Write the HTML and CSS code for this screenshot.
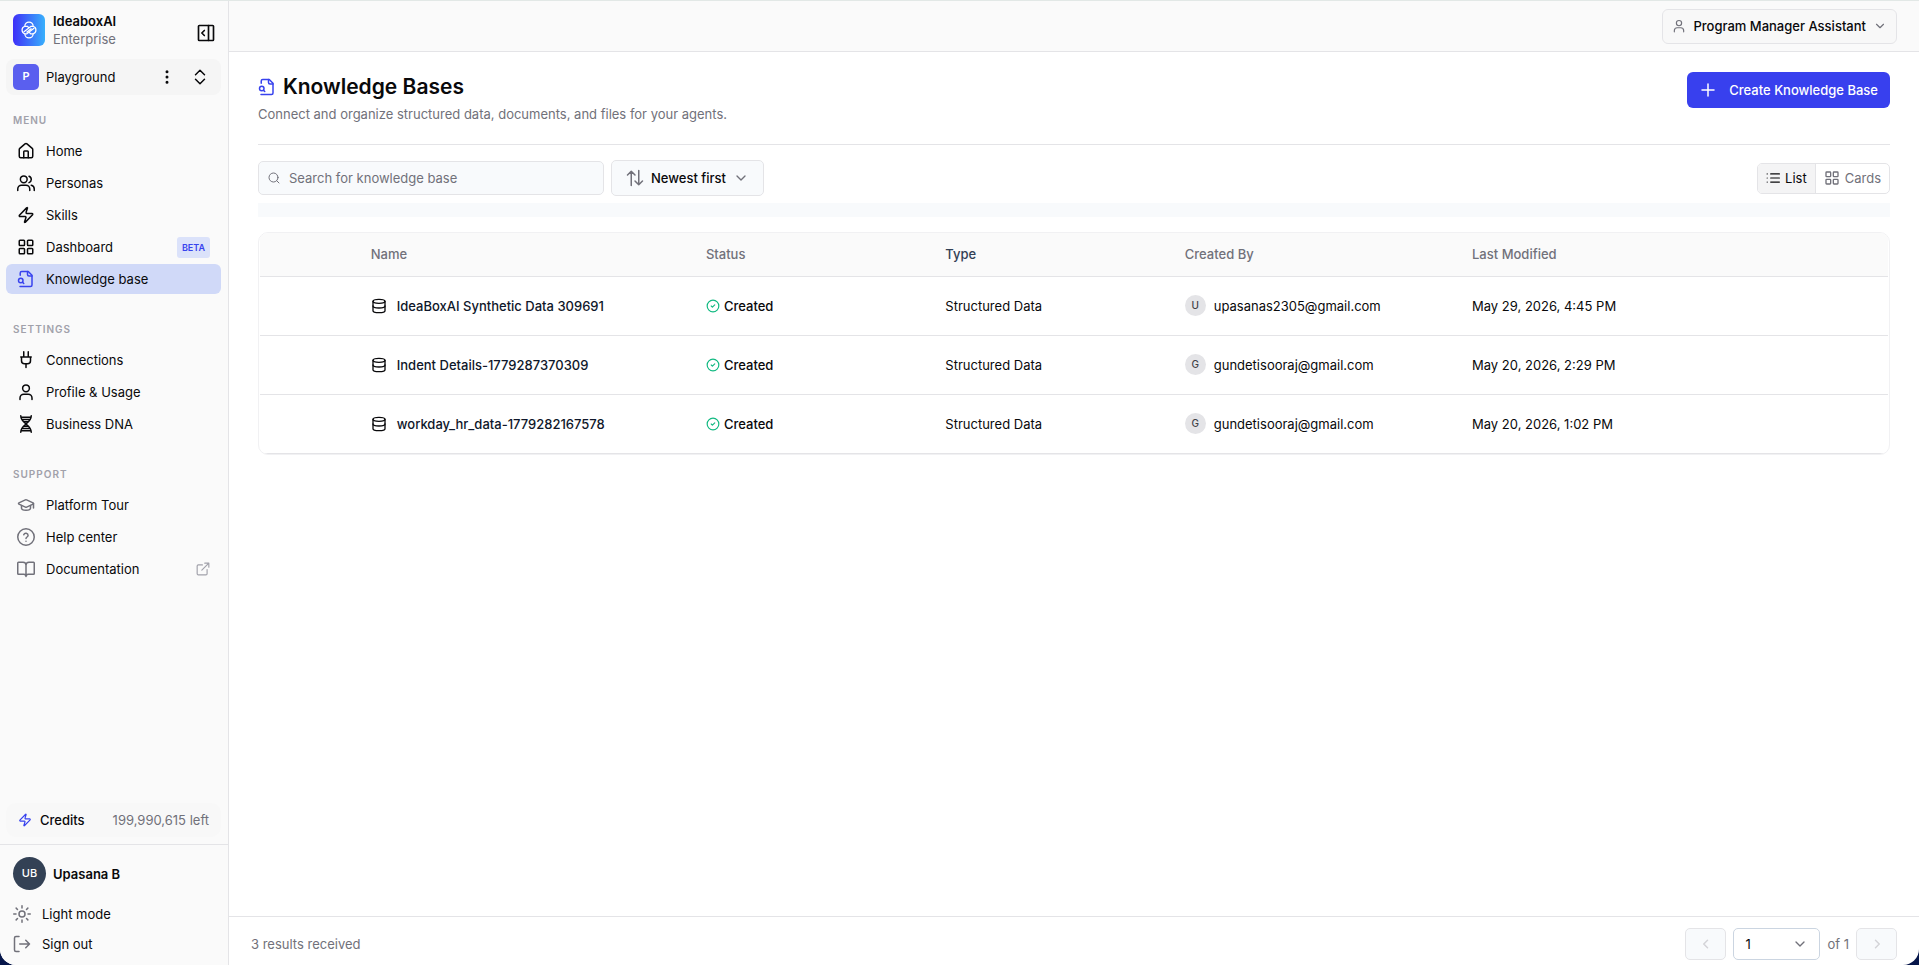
FILE: index.html
```html
<!DOCTYPE html>
<html lang="en">

<head>
  <meta charset="UTF-8">
  <meta name="viewport" content="width=device-width, initial-scale=1.0">
  <title>Knowledge Bases</title>
  <link rel="stylesheet" href="styles.css">
</head>

<body>
  <!-- shared icons -->
  <svg class="sprite" aria-hidden="true">
    <symbol id="i-kb" viewBox="0 0 24 24">
      <path d="M14 2v4a2 2 0 0 0 2 2h4" />
      <path d="M4.3 7V4a2 2 0 0 1 2-2H15l5 5v13a2 2 0 0 1-2 2H4" />
      <circle cx="5" cy="14" r="3" />
      <path d="m9 18-1.5-1.5" />
    </symbol>
    <symbol id="i-zap" viewBox="0 0 24 24">
      <path d="M4 14a1 1 0 0 1-.78-1.63l9.9-10.2a.5.5 0 0 1 .86.46l-1.92 6.02A1 1 0 0 0 13 10h7a1 1 0 0 1 .78 1.63l-9.9 10.2a.5.5 0 0 1-.86-.46l1.92-6.02A1 1 0 0 0 11 14z" />
    </symbol>
    <symbol id="i-user" viewBox="0 0 24 24">
      <circle cx="12" cy="7" r="4.5" />
      <path d="M4 22v-2a5 5 0 0 1 5-5h6a5 5 0 0 1 5 5v2" />
    </symbol>
    <symbol id="i-grid" viewBox="0 0 24 24">
      <rect x="3" y="3" width="7" height="7" rx="1" />
      <rect x="14" y="3" width="7" height="7" rx="1" />
      <rect x="14" y="14" width="7" height="7" rx="1" />
      <rect x="3" y="14" width="7" height="7" rx="1" />
    </symbol>
    <symbol id="i-down" viewBox="0 0 24 24">
      <path d="m6 9 6 6 6-6" />
    </symbol>
    <symbol id="i-db" viewBox="0 0 24 24">
      <ellipse cx="12" cy="5" rx="9" ry="3" />
      <path d="M3 5v14a9 3 0 0 0 18 0V5" />
      <path d="M3 12a9 3 0 0 0 18 0" />
    </symbol>
    <symbol id="i-check" viewBox="0 0 24 24">
      <circle cx="12" cy="12" r="10" />
      <path d="m9 12 2 2 4-4" />
    </symbol>
  </svg>

  <div id="app">
    <aside class="sidebar">
      <div class="brand">
        <div class="logo">
          <svg class="icon" viewBox="0 0 24 24">
            <path d="M7 7.500a5 5 0 0 1 10 0 4.700 4.700 0 0 1 0 9 5 5 0 0 1-10 0 4.700 4.700 0 0 1 0-9z" />
            <path d="M7 7.500h3l2 2M17 16.500h-3l-2-2M6 14l8.500-6.500H17M18 10l-8.500 6.500H7M9.500 14.500l5-4" />
          </svg>
        </div>
        <div class="brand-text">
          <strong>IdeaboxAI</strong>
          <span>Enterprise</span>
        </div>
        <button class="plain" aria-label="Collapse sidebar">
          <svg class="icon s20" viewBox="0 0 24 24">
            <rect x="3" y="3" width="18" height="18" rx="1" />
            <path d="M15 3v18M10 9l-3 3 3 3" />
          </svg>
        </button>
      </div>

      <div class="workspace">
        <span class="badge-p">P</span>
        <span class="workspace-name">Playground</span>
        <button class="plain" aria-label="More">
          <svg class="icon dots s18" viewBox="0 0 24 24">
            <circle cx="12" cy="5" r="1" />
            <circle cx="12" cy="12" r="1" />
            <circle cx="12" cy="19" r="1" />
          </svg>
        </button>
        <button class="plain" aria-label="Switch workspace">
          <svg class="icon s18" viewBox="0 0 24 24">
            <path d="m6 9 6-6 6 6M6 15l6 6 6-6" />
          </svg>
        </button>
      </div>

      <nav class="nav">
        <h2>MENU</h2>
        <ul>
          <li><a href="#"><svg class="icon s18" viewBox="0 0 24 24">
                <path d="M15 21v-8a1 1 0 0 0-1-1h-4a1 1 0 0 0-1 1v8" />
                <path d="M3 10a2 2 0 0 1 .7-1.5l7-6a2 2 0 0 1 2.6 0l7 6A2 2 0 0 1 21 10v9a2 2 0 0 1-2 2H5a2 2 0 0 1-2-2z" />
              </svg>Home</a></li>
          <li><a href="#"><svg class="icon s18" viewBox="0 0 24 24">
                <path d="M17 22v-2a5 5 0 0 0-5-5H6a5 5 0 0 0-5 5v2" />
                <circle cx="9" cy="7" r="4.5" />
                <path d="M23 22v-2a5 5 0 0 0-4-5M16 3a4.500 4.500 0 0 1 0 8.500" />
              </svg>Personas</a></li>
          <li><a href="#"><svg class="icon s18"><use href="#i-zap" /></svg>Skills</a></li>
          <li><a href="#"><svg class="icon s18"><use href="#i-grid" /></svg>Dashboard<span class="beta">BETA</span></a></li>
          <li><a href="#" class="active"><svg class="icon s18"><use href="#i-kb" /></svg>Knowledge base</a></li>
        </ul>

        <h2>SETTINGS</h2>
        <ul>
          <li><a href="#"><svg class="icon s18" viewBox="0 0 24 24">
                <path d="M12 22v-5M9 8V1M15 8V1M5 8h14M18 8v5a4 4 0 0 1-4 4h-4a4 4 0 0 1-4-4V8" />
              </svg>Connections</a></li>
          <li><a href="#"><svg class="icon s18"><use href="#i-user" /></svg>Profile &amp; Usage</a></li>
          <li><a href="#"><svg class="icon s18" viewBox="0 0 24 24">
                <path d="M5 1c0 11 14 11 14 22M19 1c0 11-14 11-14 22M6 3h12M7 6h10M9 9h6M9 15h6M7 18h10M6 21h12" />
              </svg>Business DNA</a></li>
        </ul>

        <h2>SUPPORT</h2>
        <ul class="muted-icons">
          <li><a href="#"><svg class="icon s18" viewBox="0 0 24 24">
                <path d="M21.400 10.900a1 1 0 0 0 0-1.800L12.800 5.200a2 2 0 0 0-1.700 0L2.600 9.100a1 1 0 0 0 0 1.800l8.600 3.900a2 2 0 0 0 1.700 0z" />
                <path d="M22 10v6M6 12.500V16a6 3 0 0 0 12 0v-3.500" />
              </svg>Platform Tour</a></li>
          <li><a href="#"><svg class="icon s18" viewBox="0 0 24 24">
                <circle cx="12" cy="12" r="11" />
                <path d="M9 9a3 3 0 0 1 5.800 1c0 2-2.800 2-2.800 4M12 17.500v.1" />
              </svg>Help center</a></li>
          <li><a href="#"><svg class="icon s18" viewBox="0 0 24 24">
                <path d="M12 7v15M2 19a1 1 0 0 1-1-1V4a1 1 0 0 1 1-1h6a4 4 0 0 1 4 4 4 4 0 0 1 4-4h6a1 1 0 0 1 1 1v14a1 1 0 0 1-1 1h-7a3 3 0 0 0-3 3 3 3 0 0 0-3-3z" />
              </svg>Documentation<svg class="icon s14 external" viewBox="0 0 24 24">
                <path d="M15 2h7v7M10 14 22 2M19 13v7a2 2 0 0 1-2 2H4a2 2 0 0 1-2-2V7a2 2 0 0 1 2-2h7" />
              </svg></a></li>
        </ul>
      </nav>

      <div class="credits">
        <svg class="icon s14"><use href="#i-zap" /></svg>
        <b>Credits</b>
        <span>199,990,615 left</span>
      </div>

      <div class="account">
        <div class="user"><span class="user-avatar">UB</span><strong>Upasana B</strong></div>
        <button class="account-btn">
          <svg class="icon s18" viewBox="0 0 24 24">
            <circle cx="12" cy="12" r="4" />
            <path d="M12 1v3M12 20v3M4.200 4.200l1.800 1.800M18 18l1.800 1.800M1 12h3M20 12h3M6 18l-1.800 1.800M19.800 4.200 18 6" />
          </svg>Light mode
        </button>
        <button class="account-btn">
          <svg class="icon s18" viewBox="0 0 24 24">
            <path d="M8 22H4a2 2 0 0 1-2-2V4a2 2 0 0 1 2-2h4M17 17l5-5-5-5M22 12H9" />
          </svg>Sign out
        </button>
      </div>
    </aside>

    <div class="content">
      <header class="topbar">
        <button class="assistant">
          <svg class="icon s14"><use href="#i-user" /></svg>
          Program Manager Assistant
          <svg class="icon s14"><use href="#i-down" /></svg>
        </button>
      </header>

      <main class="main">
        <div class="page-head">
          <div>
            <h1><svg class="icon s18"><use href="#i-kb" /></svg>Knowledge Bases</h1>
            <p>Connect and organize structured data, documents, and files for your agents.</p>
          </div>
          <button class="create">
            <svg class="icon s18" viewBox="0 0 24 24">
              <path d="M4 12h16M12 4v16" />
            </svg>
            Create Knowledge Base
          </button>
        </div>

        <div class="toolbar">
          <label class="search">
            <svg class="icon s12" viewBox="0 0 24 24">
              <circle cx="11" cy="11" r="9" />
              <path d="m22 22-4.500-4.500" />
            </svg>
            <input type="text" placeholder="Search for knowledge base" aria-label="Search for knowledge base">
          </label>
          <button class="sort">
            <svg class="icon s18" viewBox="0 0 24 24">
              <path d="M7 22V3M2 8l5-5 5 5M17 2v19M12 16l5 5 5-5" />
            </svg>
            Newest first
            <svg class="icon s16"><use href="#i-down" /></svg>
          </button>
          <div class="view">
            <button class="on">
              <svg class="icon s14" viewBox="0 0 24 24">
                <path d="M8 5h15M8 12h15M8 19h15M2 5h.1M2 12h.1M2 19h.1" />
              </svg>List
            </button>
            <button><svg class="icon s16"><use href="#i-grid" /></svg>Cards</button>
          </div>
        </div>

        <div class="strip"></div>

        <div class="table-wrap">
          <table>
            <colgroup>
              <col class="c-check">
              <col class="c-name">
              <col class="c-status">
              <col class="c-type">
              <col class="c-by">
              <col class="c-date">
            </colgroup>
            <thead>
              <tr>
                <th></th>
                <th>Name</th>
                <th>Status</th>
                <th class="dark">Type</th>
                <th>Created By</th>
                <th>Last Modified</th>
              </tr>
            </thead>
            <tbody>
              <tr>
                <td></td>
                <td><div class="cell name"><svg class="icon s16"><use href="#i-db" /></svg>IdeaBoxAI Synthetic Data 309691</div></td>
                <td><div class="cell status"><svg class="icon s14"><use href="#i-check" /></svg>Created</div></td>
                <td>Structured Data</td>
                <td><div class="cell by"><span class="initial">U</span>upasanas2305@gmail.com</div></td>
                <td>May 29, 2026, 4:45 PM</td>
              </tr>
              <tr>
                <td></td>
                <td><div class="cell name"><svg class="icon s16"><use href="#i-db" /></svg>Indent Details-1779287370309</div></td>
                <td><div class="cell status"><svg class="icon s14"><use href="#i-check" /></svg>Created</div></td>
                <td>Structured Data</td>
                <td><div class="cell by"><span class="initial">G</span>gundetisooraj@gmail.com</div></td>
                <td>May 20, 2026, 2:29 PM</td>
              </tr>
              <tr>
                <td></td>
                <td><div class="cell name"><svg class="icon s16"><use href="#i-db" /></svg>workday_hr_data-1779282167578</div></td>
                <td><div class="cell status"><svg class="icon s14"><use href="#i-check" /></svg>Created</div></td>
                <td>Structured Data</td>
                <td><div class="cell by"><span class="initial">G</span>gundetisooraj@gmail.com</div></td>
                <td>May 20, 2026, 1:02 PM</td>
              </tr>
            </tbody>
          </table>
        </div>
      </main>

      <footer class="footer">
        <span class="results">3 results received</span>
        <button class="pager" aria-label="Previous page" disabled>
          <svg class="icon s18" viewBox="0 0 24 24">
            <path d="m14 7-5 5 5 5" />
          </svg>
        </button>
        <div class="page-select">
          <select aria-label="Page">
            <option>1</option>
          </select>
          <svg class="icon s16"><use href="#i-down" /></svg>
        </div>
        <span>of 1</span>
        <button class="pager" aria-label="Next page" disabled>
          <svg class="icon s18" viewBox="0 0 24 24">
            <path d="m10 7 5 5-5 5" />
          </svg>
        </button>
      </footer>
    </div>
  </div>
</body>

</html>
```
FILE: styles.css
```css
* {
  box-sizing: border-box;
}

html,
body {
  height: 100%;
  margin: 0;
}

body {
  background-color: #06164a;
  color: #09090b;
  font: 13px/18px Inter, "Liberation Sans", sans-serif;
}

button,
input,
select {
  font: inherit;
  color: inherit;
}

h1,
h2,
p,
ul {
  margin: 0;
  padding: 0;
}

.sprite {
  display: none;
}

.icon {
  flex: none;
  fill: none;
  stroke: currentColor;
  stroke-width: 2;
  stroke-linecap: round;
  stroke-linejoin: round;
}

.s12 {
  width: 12px;
  height: 12px;
}

.s14 {
  width: 14px;
  height: 14px;
}

.s16 {
  width: 16px;
  height: 16px;
}

.s18 {
  width: 18px;
  height: 18px;
}

.s20 {
  width: 20px;
  height: 20px;
}

#app {
  display: flex;
  height: 100%;
  border-top: 1px solid #e2e8e6;
  border-radius: 0 0 16px 16px;
  overflow: hidden;
  background-color: #fff;
}

/* sidebar */
.sidebar {
  display: flex;
  flex-direction: column;
  flex: none;
  width: 229px;
  background-color: #fafafa;
  border-right: 1px solid #e4e4e7;
}

.plain {
  display: flex;
  padding: 0;
  border: none;
  background: none;
}

.brand {
  display: flex;
  align-items: center;
  gap: 8px;
  padding: 11px 12px 11px 13px;
}

.brand .plain {
  padding-top: 6px;
}

.logo {
  display: flex;
  align-items: center;
  justify-content: center;
  width: 32px;
  height: 32px;
  border-radius: 6px;
  color: #fff;
  background: linear-gradient(90deg, #3f30f8, #38b0fc);
}

.logo .icon {
  width: 20px;
  height: 20px;
  stroke-width: 1.5;
}

.brand-text {
  display: flex;
  flex-direction: column;
  flex: 1;
}

.brand-text strong,
.user strong {
  font-weight: 600;
}

.brand-text span {
  color: #71717a;
}

.workspace {
  display: flex;
  align-items: center;
  height: 36px;
  margin: 0 7px 0 6px;
  padding: 0 12px 0 7px;
  gap: 7px;
  border-radius: 8px;
  background-color: #f5f5f5;
}

.workspace .plain + .plain {
  margin-left: 8px;
}

.workspace-name {
  flex: 1;
}

.dots {
  fill: currentColor;
}

.badge-p {
  width: 26px;
  height: 26px;
  border-radius: 5px;
  background-color: #5a5fef;
  color: #fff;
  font-size: 11px;
  font-weight: 600;
  line-height: 24px;
  text-align: center;
}

.nav {
  flex: 1;
}

.nav h2 {
  margin: 26px 0 7px 13px;
  color: #a1a1aa;
  font-size: 10px;
  font-weight: 600;
  letter-spacing: 1px;
  line-height: 18px;
}

.nav h2:first-child {
  margin-top: 16px;
}

.nav ul {
  display: flex;
  flex-direction: column;
  gap: 2px;
  margin: 0 7px 0 6px;
  list-style: none;
}

.nav a {
  display: flex;
  align-items: center;
  gap: 11px;
  height: 30px;
  padding: 0 11px;
  border-radius: 6px;
  color: inherit;
  text-decoration: none;
}

.nav .active {
  background-color: #d0d9f8;
}

.nav .active .icon,
.credits .icon,
h1 .icon {
  color: #3843ee;
}

.muted-icons .icon {
  color: #71717a;
}

.muted-icons .external {
  margin-left: auto;
  color: #a1a1aa;
}

.beta {
  margin-left: auto;
  padding: 0 5px;
  border-radius: 3px;
  background-color: #dbe2fa;
  color: #3843ee;
  font-size: 9px;
  font-weight: 600;
  line-height: 21px;
}

.credits {
  display: flex;
  align-items: center;
  height: 34px;
  margin: 0 7px 7px 6px;
  padding: 0 12px;
  gap: 8px;
  border-radius: 10px;
  background-color: #f8f8f8;
}

.credits b {
  flex: 1;
  font-weight: 500;
}

.credits span {
  color: #71717a;
}

.account {
  padding: 12px 12px 6px 13px;
  border-top: 1px solid #e4e4e7;
}

.user {
  display: flex;
  align-items: center;
  gap: 7px;
  margin-bottom: 9px;
}

.user-avatar {
  width: 33px;
  height: 33px;
  border-radius: 50%;
  background-color: #334155;
  color: #fff;
  font-size: 11px;
  font-weight: 500;
  line-height: 33px;
  text-align: center;
}

.account-btn {
  display: flex;
  align-items: center;
  gap: 11px;
  height: 30px;
  padding: 0;
  border: none;
  background: none;
}

.account-btn .icon {
  color: #71717a;
}

/* content */
.content {
  display: flex;
  flex-direction: column;
  flex: 1;
  min-width: 0;
}

.topbar {
  display: flex;
  align-items: center;
  justify-content: flex-end;
  height: 51px;
  padding: 0 22px;
  border-bottom: 1px solid #e4e4e7;
  background-color: #fafafa;
}

.assistant {
  display: flex;
  align-items: center;
  gap: 7px;
  height: 35px;
  padding: 0 9px;
  border: 1px solid #e4e4e7;
  border-radius: 6px;
  background-color: #f8f8f8;
  font-weight: 500;
}

.assistant .icon,
.sort .icon {
  color: #71717a;
}

.main {
  flex: 1;
  padding: 20px 29px 0;
}

.page-head {
  display: flex;
  align-items: flex-start;
  justify-content: space-between;
  height: 73px;
  border-bottom: 1px solid #e4e4e7;
}

h1 {
  display: flex;
  align-items: center;
  gap: 7px;
  font-size: 21px;
  font-weight: 600;
  line-height: 30px;
}

.page-head p {
  margin-top: 3px;
  color: #71717a;
}

.create {
  display: flex;
  align-items: center;
  gap: 12px;
  height: 36px;
  padding: 0 12px;
  border: none;
  border-radius: 6px;
  background-color: #3840ee;
  color: #fff;
  font-weight: 500;
}

.toolbar {
  display: flex;
  align-items: center;
  gap: 7px;
  padding: 15px 0 7px;
}

.search {
  display: flex;
  align-items: center;
  gap: 9px;
  width: 346px;
  height: 34px;
  padding: 0 9px;
  border: 1px solid #e4e4e7;
  border-radius: 5px;
  background-color: #f8fafc;
  color: #71717a;
}

.search input {
  flex: 1;
  min-width: 0;
  padding: 0;
  border: none;
  outline: none;
  background: none;
}

.search input::placeholder {
  color: #71717a;
}

.sort {
  display: flex;
  align-items: center;
  gap: 7px;
  height: 36px;
  padding: 0 14px;
  border: 1px solid #e4e4e7;
  border-radius: 5px;
  background-color: #f8fafc;
  font-weight: 500;
}

.view {
  display: flex;
  margin-left: auto;
  border: 1px solid #e4e4e7;
  border-radius: 5px;
  overflow: hidden;
}

.view button {
  display: flex;
  align-items: center;
  gap: 5px;
  height: 29px;
  padding: 0 8px;
  border: none;
  background: none;
  color: #71717a;
}

.view .on {
  border-right: 1px solid #e4e4e7;
  background-color: #f4f4f5;
  color: #09090b;
}

.strip {
  height: 14px;
  margin-bottom: 15px;
  background-color: #f8fafc;
}

.table-wrap {
  padding: 0 1px;
  border: 1px solid #f1f1f3;
  border-radius: 10px;
  overflow: hidden;
}

table {
  width: 100%;
  table-layout: fixed;
  border-collapse: collapse;
}

.c-check {
  width: 40px;
}

.c-name {
  width: 140px;
}

.c-status,
.c-type {
  width: 100px;
}

.c-by {
  width: 120px;
}

.c-date {
  width: 180px;
}

th,
td {
  padding: 0 15px;
  border-bottom: 1px solid #e4e4e7;
  text-align: left;
}

th {
  height: 43px;
  background-color: #fafafa;
  color: #71717a;
  font-weight: 500;
}

.dark {
  color: #334155;
}

td {
  height: 59px;
}

.cell {
  display: flex;
  align-items: center;
}

.name {
  gap: 10px;
  color: #0f172a;
  font-weight: 500;
}

.name .icon {
  color: #09090b;
}

.status {
  gap: 4px;
  font-weight: 500;
}

.status .icon {
  color: #10b981;
}

.by {
  gap: 8px;
}

.initial {
  width: 21px;
  height: 21px;
  border-radius: 50%;
  background-color: #e4e4e7;
  color: #3f3f46;
  font-size: 10px;
  font-weight: 500;
  line-height: 21px;
  text-align: center;
}

.footer {
  display: flex;
  align-items: center;
  gap: 7px;
  height: 49px;
  padding: 6px 22px 1px;
  border-top: 1px solid #e4e4e7;
  color: #71717a;
}

.results {
  flex: 1;
}

.pager {
  display: flex;
  align-items: center;
  justify-content: center;
  width: 41px;
  height: 32px;
  padding: 0;
  border: 1px solid #e4e4e7;
  border-radius: 5px;
  background-color: #f8fafc;
  color: #d4d4d8;
}

.page-select {
  display: grid;
  align-items: center;
  width: 87px;
  height: 32px;
}

.page-select > * {
  grid-area: 1 / 1;
}

.page-select .icon {
  justify-self: end;
  margin-right: 12px;
  pointer-events: none;
}

select {
  width: 100%;
  height: 32px;
  padding: 0 11px;
  border: 1px solid #cbd5e1;
  border-radius: 5px;
  background-color: #fff;
  color: #09090b;
  appearance: none;
}
```
